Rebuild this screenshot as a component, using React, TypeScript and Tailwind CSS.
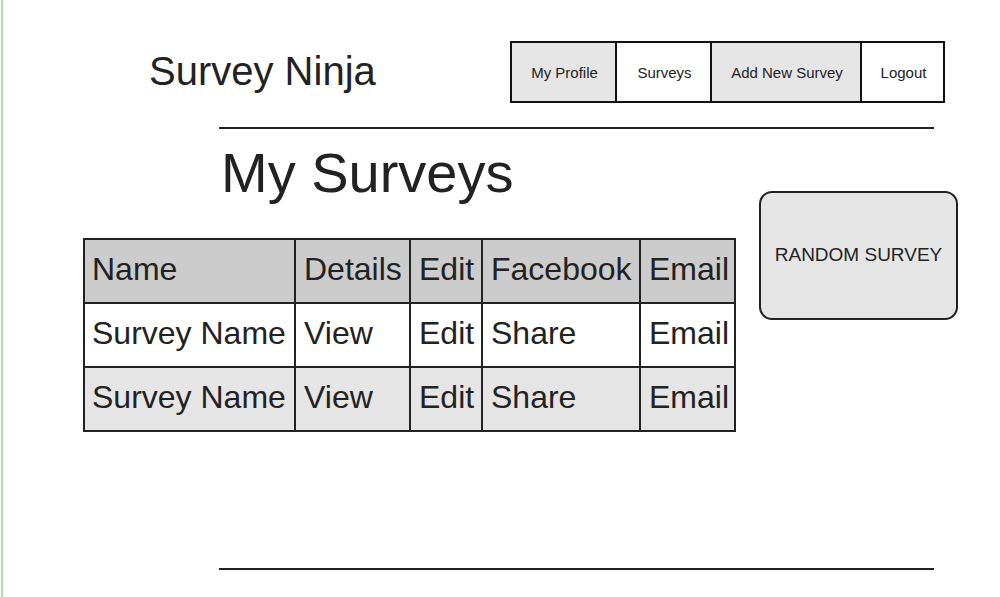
const navItems = [
  { label: 'My Profile', w: 'w-[105px]', bg: 'bg-[#e5e5e5]' },
  { label: 'Surveys', w: 'w-[95px]', bg: 'bg-white' },
  { label: 'Add New Survey', w: 'w-[150px]', bg: 'bg-[#e5e5e5]' },
  { label: 'Logout', w: 'w-[83px]', bg: 'bg-white' },
];

const colWidths = ['w-[211px] pl-[7px]', 'w-[115px] pl-[8px]', 'w-[72px] pl-[8px]', 'w-[158px] pl-[8px]', 'w-[95px] pl-[8px]'];

const rows = [
  { cells: ['Name', 'Details', 'Edit', 'Facebook', 'Email'], bg: 'bg-[#cccccc]' },
  { cells: ['Survey Name', 'View', 'Edit', 'Share', 'Email'], bg: 'bg-white' },
  { cells: ['Survey Name', 'View', 'Edit', 'Share', 'Email'], bg: 'bg-[#e5e5e5]' },
];

export default function App() {
  return (
    <div className="flex h-[597px] w-[1000px] overflow-hidden bg-white font-['Liberation_Sans',Arial,sans-serif] text-[#222]">
      {/* green frame edge */}
      <div className="ml-[1px] w-[2px] shrink-0 bg-[#a9e2a9]" />

      <div className="flex min-w-0 flex-1 flex-col">
        {/* Header */}
        <div className="flex items-start pt-[41px]">
          <h1 className="ml-[146px] mt-[7px] text-[40px] leading-[46px] font-normal">Survey Ninja</h1>
          <nav className="ml-auto mr-[55px] flex border-y-2 border-l-2 border-[#111]">
            {navItems.map((item) => (
              <div
                key={item.label}
                className={`${item.w} ${item.bg} flex h-[58px] items-center justify-center border-r-2 border-[#111] pl-[2px] pt-[2px] text-[15px]`}
              >
                {item.label}
              </div>
            ))}
          </nav>
        </div>

        <div className="ml-[216px] mt-[24px] h-[2px] w-[715px] bg-[#222]" />

        {/* Body */}
        <div className="flex items-start">
          <div className="ml-[80px] flex flex-col">
            <h2 className="ml-[138px] mt-[12px] text-[56px] leading-[64px] font-normal">My Surveys</h2>
            <div className="mt-[33px] flex w-max flex-col border-l-2 border-t-2 border-[#222]">
              {rows.map((row, ri) => (
                <div key={ri} className={`flex ${row.bg}`}>
                  {row.cells.map((cell, ci) => (
                    <div
                      key={ci}
                      className={`${colWidths[ci]} flex h-[64px] items-center whitespace-nowrap border-b-2 border-r-2 border-[#222] pb-[4px] text-[32px] leading-none`}
                    >
                      {cell}
                    </div>
                  ))}
                </div>
              ))}
            </div>
          </div>

          <button className="ml-auto mr-[42px] mt-[62px] flex h-[129px] w-[199px] items-center justify-center rounded-[13px] border-2 border-[#222] bg-[#e5e5e5] text-[19px] text-[#222]">
            RANDOM SURVEY
          </button>
        </div>

        <div className="ml-[216px] mt-[136px] h-[2px] w-[715px] bg-[#222]" />
      </div>
    </div>
  );
}
